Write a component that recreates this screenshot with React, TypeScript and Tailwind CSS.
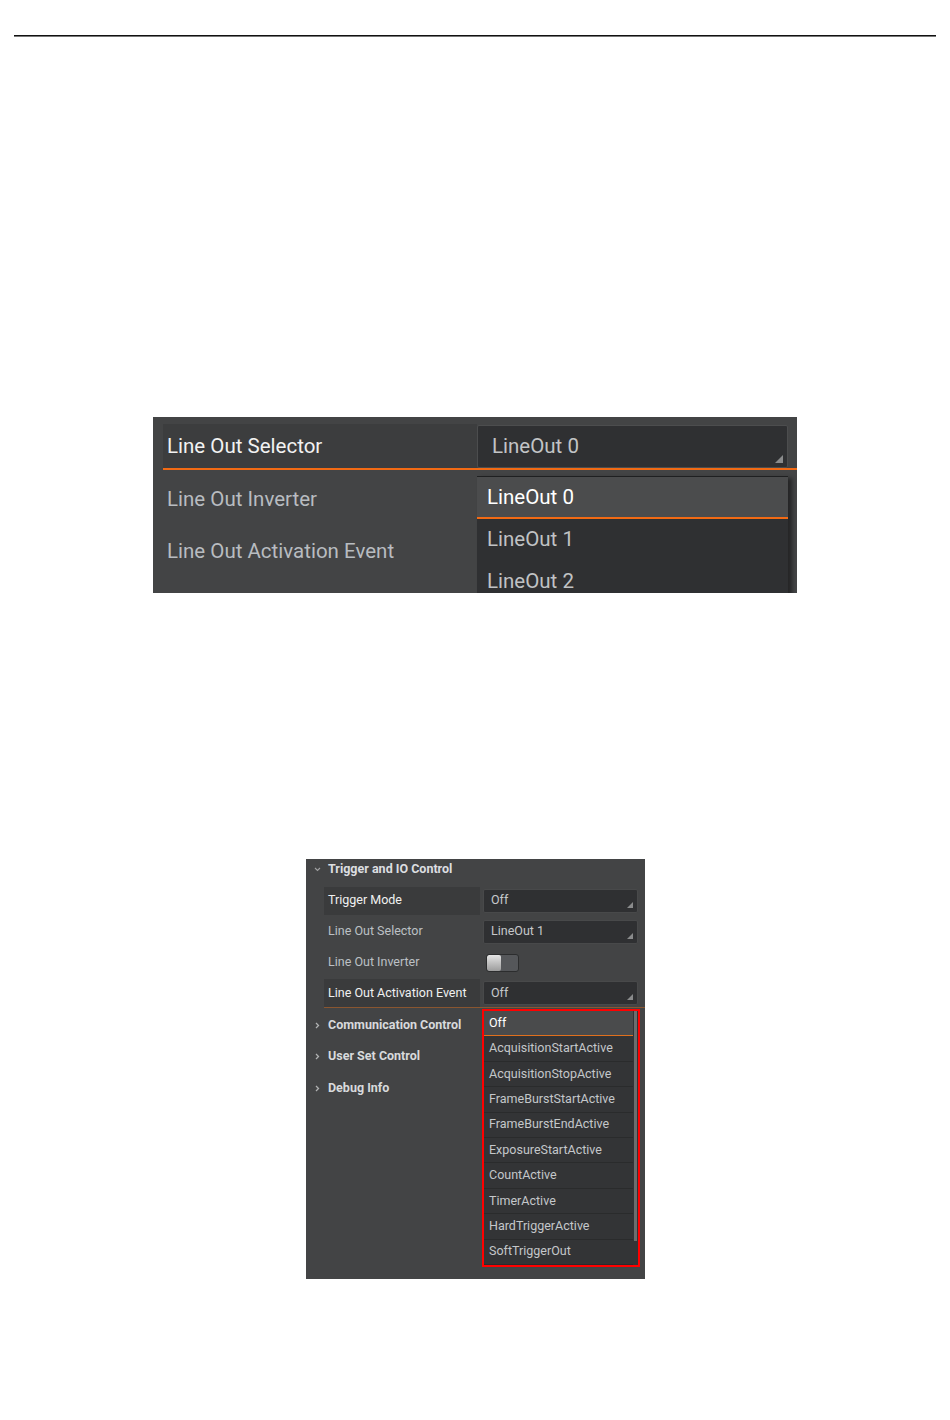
import React from "react";

const FONT = { fontFamily: "Roboto, 'Noto Sans', sans-serif" };

function Grip({ size = 7 }: { size?: number }) {
  return (
    <svg
      width={size}
      height={size}
      viewBox="0 0 7 7"
      className="absolute right-[4px] bottom-[4px]"
    >
      <polygon points="7,0 7,7 0,7" fill="#8a8b8c" />
    </svg>
  );
}

function ChevronDown() {
  return (
    <svg width="7" height="5" viewBox="0 0 7 5" className="shrink-0">
      <path d="M1 1 L3.5 3.5 L6 1" stroke="#a0a1a2" strokeWidth="1.1" fill="none" />
    </svg>
  );
}

function ChevronRight() {
  return (
    <svg width="5" height="7" viewBox="0 0 5 7" className="shrink-0">
      <path d="M1 1 L3.5 3.5 L1 6" stroke="#b0b1b2" strokeWidth="1.3" fill="none" />
    </svg>
  );
}

function ValueBox({ text }: { text: string }) {
  return (
    <div className="relative ml-[3px] flex h-[24px] w-[155px] items-center rounded-[2px] border border-[#48494a] bg-[#2f3032] pl-[7px] text-[#c6c8ca]">
      {text}
      <Grip size={6} />
    </div>
  );
}

const listItems = [
  "Off",
  "AcquisitionStartActive",
  "AcquisitionStopActive",
  "FrameBurstStartActive",
  "FrameBurstEndActive",
  "ExposureStartActive",
  "CountActive",
  "TimerActive",
  "HardTriggerActive",
  "SoftTriggerOut",
];

export default function App() {
  return (
    <div className="h-[1420px] w-[950px] overflow-hidden bg-white" style={FONT}>
      {/* top rule */}
      <div className="px-[14px] pt-[35px]">
        <div className="h-[1px] bg-[#111]" />
        <div className="h-[1px] bg-[#777]" />
      </div>

      {/* Panel 1 */}
      <div className="relative ml-[153px] mt-[380px] h-[176px] w-[644px] overflow-hidden bg-[#434445] pt-[7px] text-[20.5px]">
        <div className="ml-[10px] flex h-[44px]">
          <div className="flex h-[44px] w-[314px] items-center bg-[#3c3d3e] pl-[4px] text-[#f2f2f2]">
            Line Out Selector
          </div>
          <div className="relative mt-[1px] flex h-[43px] w-[311px] items-center rounded-[2px] border border-[#4c4d4e] bg-[#2f3032] pl-[14px] text-[#c2c4c6]">
            LineOut 0
            <Grip size={8} />
          </div>
        </div>
        <div className="ml-[10px] h-[1.5px] bg-[#f26a14]" />
        <div className="mt-[4px] flex h-[52px] items-center pl-[14px] text-[#b8bcc0]">
          Line Out Inverter
        </div>
        <div className="flex h-[52px] items-center pl-[14px] text-[#b8bcc0]">
          Line Out Activation Event
        </div>

        {/* open dropdown */}
        <div className="absolute left-[324px] top-[59px] w-[311px] border-t border-[#1f2021] bg-[#2f3032] shadow-[4px_2px_4px_rgba(0,0,0,0.45)]">
          <div className="flex h-[40px] items-center bg-[#4b4c4d] pl-[10px] text-white">
            LineOut 0
          </div>
          <div className="h-[1.5px] bg-[#f26a14]" />
          <div className="flex h-[42px] items-center pl-[10px] text-[#c0c2c4]">LineOut 1</div>
          <div className="flex h-[42px] items-center pl-[10px] text-[#c0c2c4]">LineOut 2</div>
          <div className="h-[42px]" />
        </div>
      </div>

      {/* Panel 2 */}
      <div className="relative ml-[306px] mt-[266px] h-[420px] w-[339px] bg-[#434445] text-[12.5px]">
        <div className="flex h-[26px] items-center gap-[7px] pl-[8px] pb-[5px] font-bold text-[#dcdee0]">
          <ChevronDown />
          <span>Trigger and IO Control</span>
        </div>

        {/* Trigger Mode */}
        <div className="flex h-[31px] items-center pl-[18px]">
          <div className="flex h-[28px] w-[156px] items-center bg-[#3a3b3c] pl-[4px] text-[#f0f0f0]">
            Trigger Mode
          </div>
          <ValueBox text="Off" />
        </div>

        {/* Line Out Selector */}
        <div className="flex h-[31px] items-center pl-[18px]">
          <div className="flex h-[28px] w-[156px] items-center pl-[4px] text-[#bcc0c4]">
            Line Out Selector
          </div>
          <ValueBox text="LineOut 1" />
        </div>

        {/* Line Out Inverter */}
        <div className="flex h-[31px] items-center pl-[18px]">
          <div className="flex h-[28px] w-[156px] items-center pl-[4px] text-[#bcc0c4]">
            Line Out Inverter
          </div>
          <div className="ml-[6px] flex h-[18px] w-[33px] overflow-hidden rounded-[3px] border border-[#2c2d2e] bg-[#55575a]">
            <div className="h-full w-[14px] rounded-[2px] bg-gradient-to-b from-[#e6e6e6] to-[#9c9c9c]" />
          </div>
        </div>

        {/* Line Out Activation Event */}
        <div className="flex h-[31px] flex-col pl-[18px]">
          <div className="mt-[1px] flex h-[28px] items-center">
            <div className="flex h-[28px] w-[156px] items-center bg-[#3a3b3c] pl-[4px] text-[#f0f0f0]">
              Line Out Activation Event
            </div>
            <ValueBox text="Off" />
          </div>
          <div className="h-px bg-[#8a5630]" />
        </div>

        {["Communication Control", "User Set Control", "Debug Info"].map((t) => (
          <div key={t} className="flex h-[31.5px] items-center gap-[8px] pl-[9px] pt-[1px] font-bold text-[#d8dadc]">
            <ChevronRight />
            <span>{t}</span>
          </div>
        ))}

        {/* open list with red highlight */}
        <div className="absolute left-[176px] top-[150px] h-[258px] w-[158px] border-2 border-[#ff0000] bg-[#333436]">
          <div className="relative flex h-full flex-col pr-[5px]">
            {listItems.map((t, i) => (
              <div
                key={t}
                className={
                  i === 0
                    ? "flex flex-1 items-center border-b border-[#e0701e] bg-[#4a4b4c] pl-[5px] text-white"
                    : "flex flex-1 items-center border-b border-[#2a2b2c] pl-[5px] text-[#c4c7ca]"
                }
              >
                {t}
              </div>
            ))}
            <div className="absolute right-[1px] top-0 h-[230px] w-[3px] bg-[#6c6d6e]" />
          </div>
        </div>
      </div>
    </div>
  );
}
